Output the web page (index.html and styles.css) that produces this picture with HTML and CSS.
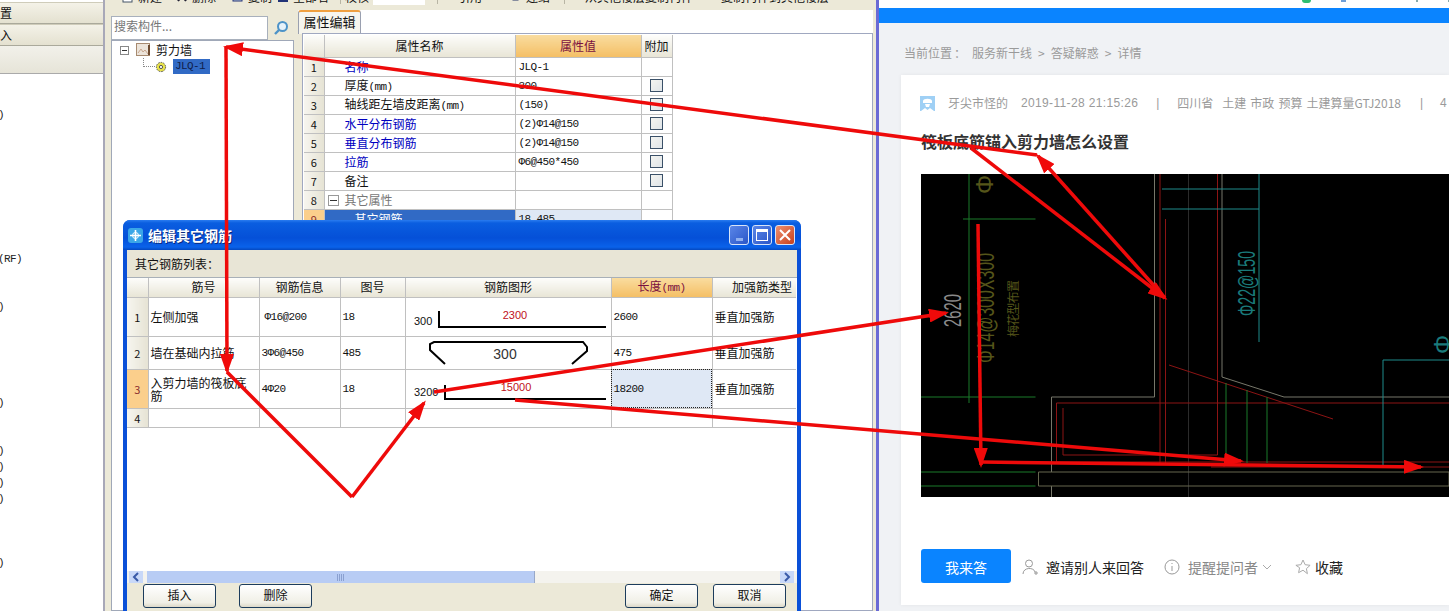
FILE: index.html
```html
<!DOCTYPE html>
<html lang="zh">
<head>
<meta charset="utf-8">
<title>编辑其它钢筋</title>
<link rel="stylesheet" href="styles.css">
</head>
<body>
<div class="screen">
  <section class="app">
    <aside class="side">
      <div class="side-row side-first">置</div>
      <div class="side-row">入</div>
      <div class="side-band"></div>
<pre class="side-list">


)








(RF)


)





)


)
)
)
)



)</pre>
    </aside>
    <div class="main">
      <div class="toolbar">
        <span class="tool"><svg class="ti" viewBox="0 0 12 12"><rect x="1" y="0" width="9" height="11" fill="#fff" stroke="#456"/></svg>新建</span>
        <span class="tool"><svg class="ti" viewBox="0 0 12 12"><path d="M2 0l8 10M10 0L2 10" stroke="#223" stroke-width="2"/></svg>删除</span>
        <span class="tool"><svg class="ti" viewBox="0 0 12 12"><rect x="1" y="0" width="9" height="10" fill="#bcd" stroke="#237"/></svg>复制</span>
        <span class="tool"><svg class="ti" viewBox="0 0 12 12"><path d="M1 10h10M4 0v10M8 0v10" stroke="#237" stroke-width="2"/></svg>全部名</span>
        <span class="tool tool-sep">校核</span>
        <span class="tool-input"></span>
        <span class="tool tool-sep"><svg class="ti" viewBox="0 0 12 12"><path d="M1 0l5 8M9 0v9" stroke="#a33" stroke-width="2"/></svg>引用</span>
        <span class="tool"><svg class="ti" viewBox="0 0 12 12"><rect x="3" y="0" width="5" height="9" fill="#67c" stroke="#236"/></svg>连结</span>
        <span class="tool tool-sep"><svg class="ti" viewBox="0 0 12 12"><path d="M1 7h5" stroke="#2a6" stroke-width="4"/><path d="M7 2h5M7 5h5M7 8h5" stroke="#568" stroke-width="1.5"/></svg>从其他楼层复制构件</span>
        <span class="tool"><svg class="ti" viewBox="0 0 12 12"><path d="M1 7h5" stroke="#2a6" stroke-width="4"/><path d="M7 2h5M7 5h5M7 8h5" stroke="#568" stroke-width="1.5"/></svg>复制构件到其他楼层</span>
      </div>
      <div class="panes">
        <div class="tree-pane">
          <div class="search">
            <div class="search-input">搜索构件...</div>
            <svg class="search-icon" viewBox="0 0 16 16"><circle cx="9.5" cy="6.5" r="4.5" fill="#e6f2fa" stroke="#4d93c8" stroke-width="2"/><path d="M6 10l-4 4" stroke="#4d93c8" stroke-width="2.4"/></svg>
          </div>
          <div class="tree">
            <div class="tree-root">
              <span class="tree-box"></span>
              <svg class="tree-ico" viewBox="0 0 15 14"><rect x=".5" y=".5" width="13" height="12" fill="#ece4da" stroke="#a78a70"/><path d="M2 10l3-4 2 3 2-2 3 4" fill="none" stroke="#c9a78f"/><rect x="12" y="2" width="2" height="10" fill="#6d4a30"/></svg>
              <span>剪力墙</span>
            </div>
            <div class="tree-leaf">
              <span class="tree-dots"></span>
              <svg class="tree-gear" viewBox="0 0 12 12"><circle cx="6" cy="6" r="4.6" fill="#e8e24a" stroke="#555" stroke-dasharray="1.6 1"/><circle cx="6" cy="6" r="1.6" fill="#fff" stroke="#555"/></svg>
              <span class="tree-sel mono">JLQ-1</span>
            </div>
          </div>
        </div>
        <div class="prop-pane">
          <div class="tabs"><span class="tab">属性编辑</span></div>
          <div class="prop-panel">
            <table class="grid prop-grid">
              <colgroup><col class="pc0"><col class="pc1"><col class="pc2"><col class="pc3"></colgroup>
              <tr class="head"><th></th><th>属性名称</th><th class="hot">属性值</th><th>附加</th></tr>
              <tr><th class="rn">1</th><td class="pn link">名称</td><td class="pv mono">JLQ-1</td><td></td></tr>
              <tr><th class="rn">2</th><td class="pn">厚度<span class="mono">(mm)</span></td><td class="pv mono">300</td><td class="cbc"><span class="cb"></span></td></tr>
              <tr><th class="rn">3</th><td class="pn">轴线距左墙皮距离<span class="mono">(mm)</span></td><td class="pv mono">(150)</td><td class="cbc"><span class="cb"></span></td></tr>
              <tr><th class="rn">4</th><td class="pn link">水平分布钢筋</td><td class="pv mono">(2)Φ14@150</td><td class="cbc"><span class="cb"></span></td></tr>
              <tr><th class="rn">5</th><td class="pn link">垂直分布钢筋</td><td class="pv mono">(2)Φ14@150</td><td class="cbc"><span class="cb"></span></td></tr>
              <tr><th class="rn">6</th><td class="pn link">拉筋</td><td class="pv mono">Φ6@450*450</td><td class="cbc"><span class="cb"></span></td></tr>
              <tr><th class="rn">7</th><td class="pn">备注</td><td class="pv"></td><td class="cbc"><span class="cb"></span></td></tr>
              <tr><th class="rn">8</th><td class="pn group"><span class="minus"></span>其它属性</td><td class="pv"></td><td></td></tr>
              <tr><th class="rn hotrow">9</th><td class="pn picked">其它钢筋</td><td class="pv mono valpick">18,485</td><td></td></tr>
            </table>
          </div>
        </div>
      </div>
    </div>
  </section>

  <section class="browser">
    <div class="browser-top">
      <span class="bt bt1"></span><span class="bt bt2"></span><span class="bt bt3"></span><span class="bt bt4"></span>
    </div>
    <div class="browser-bar"></div>
    <div class="page">
      <div class="crumb"><span>当前位置</span><span>：</span><span>服务新干线</span><span>&gt;</span><span>答疑解惑</span><span>&gt;</span><span>详情</span></div>
      <article class="card">
        <div class="meta">
          <svg class="avatar" viewBox="0 0 15 17"><path d="M0 1h15v15H0z" fill="#9fd0f5"/><path d="M3 6c0-3 9-3 9 0v2H3z" fill="#fff"/><path d="M5 9h5l-1 3H6zM1 16l4-3 2.500 2 2.500-2 4 3z" fill="#fff"/></svg>
          <span class="m-name">牙尖市怪的</span>
          <span class="m-date">2019-11-28 21:15:26</span>
          <span class="m-sep">|</span>
          <span class="m-tags"><span>四川省</span><span>土建</span><span>市政</span><span>预算</span><span>土建算量GTJ2018</span></span>
          <span class="m-sep m-sep2">|</span>
          <span class="m-date m-num">4</span>
        </div>
        <h1 class="title">筏板底筋锚入剪力墙怎么设置</h1>
        <svg class="cad" viewBox="0 0 528 323">
          <rect width="528" height="323" fill="#000"/>
          <g fill="none" stroke-width="1">
            <path d="M267.500 0V323" stroke="#2b2b2b"/>
            <path d="M233.500 0V223H130.500V298M130.500 312V323M301 0V203L363 223H528" stroke="#77776a"/>
            <path d="M117.500 298H528V312H117.500z" stroke="#66664f"/>
            <path d="M239 0V289M244.500 45V289M296.500 0V281H142V234M135.500 289V229H528M135.500 288H528M290 293H528M248 191L412 245" stroke="#8c1414"/>
            <path d="M338 0V168M241 15H338M241 35H338M462 291V186H528" stroke="#1f8b8b"/>
            <path d="M48 0V229M42 45H114.500M0 223H114.500M0 298H114.500M0 312H114.500M305 209V289M326 216V289M346 223V289" stroke="#1a7a2a"/>
          </g>
          <text class="cad-t cad-white" transform="translate(40 153) rotate(-90)" textLength="33" lengthAdjust="spacingAndGlyphs">2620</text>
          <text class="cad-t cad-olive" transform="translate(73 189) rotate(-90)" textLength="110" lengthAdjust="spacingAndGlyphs">Φ14@300X300</text>
          <text class="cad-c cad-olive" transform="translate(97 163) rotate(-90)" textLength="57">梅花型布置</text>
          <text class="cad-t cad-teal" transform="translate(334 142) rotate(-90)" textLength="65" lengthAdjust="spacingAndGlyphs">Φ22@150</text>
          <text class="cad-t cad-olive" transform="translate(72 20) rotate(-90)">Φ1</text>
          <text class="cad-t cad-teal" transform="translate(530 180) rotate(-90)">Φ</text>
        </svg>
        <div class="actions">
          <button class="answer">我来答</button>
          <span class="act act-invite"><svg class="aico" viewBox="0 0 16 16"><circle cx="7" cy="4.500" r="3.500" fill="none" stroke="#999"/><path d="M1 15c0-7 11-7 12-2M12 14h4M14 12v4" fill="none" stroke="#999"/></svg>邀请别人来回答</span>
          <span class="act act-gray"><svg class="aico" viewBox="0 0 16 16"><circle cx="8" cy="8" r="7" fill="none" stroke="#999"/><path d="M8 4v1M8 7v5" stroke="#999"/></svg>提醒提问者<svg class="chev" viewBox="0 0 10 6"><path d="M1 1l4 4 4-4" fill="none" stroke="#aaa"/></svg></span>
          <span class="act act-star"><svg class="aico" viewBox="0 0 16 16"><path d="M8 1l2.100 4.700 5 .6-3.700 3.400 1 5L8 11.200l-4.400 2.500 1-5L.900 6.300l5-.6z" fill="none" stroke="#aaa"/></svg>收藏</span>
        </div>
      </article>
    </div>
  </section>

  <div class="dialog">
    <header class="dlg-title">
      <svg class="dlg-ico" viewBox="0 0 15 15"><rect width="15" height="15" rx="3" fill="#3aa6e8"/><path d="M7.500 2v11M2 7.500h11" stroke="#fff" stroke-width="1.600"/><circle cx="7.500" cy="7.500" r="3" fill="none" stroke="#fff"/></svg>
      <span class="dlg-name">编辑其它钢筋</span>
      <span class="wbtns">
        <span class="wbtn"><i class="w-min"></i></span>
        <span class="wbtn"><i class="w-max"></i></span>
        <span class="wbtn wclose"><svg viewBox="0 0 12 12"><path d="M1 1l10 10M11 1L1 11" stroke="#fff" stroke-width="2"/></svg></span>
      </span>
    </header>
    <div class="dlg-body">
      <div class="dlg-label">其它钢筋列表：</div>
      <div class="dlg-gridwrap">
        <table class="grid dlg-grid">
          <colgroup><col class="dc0"><col class="dc1"><col class="dc2"><col class="dc3"><col class="dc4"><col class="dc5"><col class="dc6"></colgroup>
          <tr class="dhead"><th></th><th>筋号</th><th>钢筋信息</th><th>图号</th><th>钢筋图形</th><th class="hot">长度<span class="mono">(mm)</span></th><th class="hright">加强筋类型</th></tr>
          <tr class="r1">
            <th class="rn">1</th><td>左侧加强</td><td class="mono ind">Φ16@200</td><td class="mono">18</td>
            <td class="fig"><svg class="figsvg" viewBox="0 0 205 38"><text x="8" y="27" class="fig-n">300</text><text x="109" y="21" class="fig-r" text-anchor="middle">2300</text><path d="M33 13V29H200" fill="none" stroke="#000" stroke-width="2"/></svg></td>
            <td class="mono">2600</td><td>垂直加强筋</td>
          </tr>
          <tr class="r2">
            <th class="rn">2</th><td>墙在基础内拉筋</td><td class="mono">3Φ6@450</td><td class="mono">485</td>
            <td class="fig"><svg class="figsvg" viewBox="0 0 205 32"><text x="99" y="22" class="fig-b" text-anchor="middle">300</text><path d="M39 27L24 13V7L28 5H177L181 10V14L166 27" fill="none" stroke="#000" stroke-width="2"/></svg></td>
            <td class="mono">475</td><td>垂直加强筋</td>
          </tr>
          <tr class="r3">
            <th class="rn hotrow">3</th><td class="tight">入剪力墙的筏板底<br>筋</td><td class="mono">4Φ20</td><td class="mono">18</td>
            <td class="fig"><svg class="figsvg" viewBox="0 0 205 38"><text x="8" y="26" class="fig-n">3200</text><text x="110" y="21" class="fig-r" text-anchor="middle">15000</text><path d="M39 15V29H200" fill="none" stroke="#000" stroke-width="2"/></svg></td>
            <td class="mono valfocus">18200</td><td>垂直加强筋</td>
          </tr>
          <tr class="r4"><th class="rn">4</th><td></td><td></td><td></td><td></td><td></td><td></td></tr>
        </table>
      </div>
      <div class="scrollbar">
        <span class="sb-btn"><svg viewBox="0 0 8 10"><path d="M6 1L2 5l4 4" fill="none" stroke="#3a5aa8" stroke-width="2"/></svg></span>
        <span class="sb-thumb"><i></i></span>
        <span class="sb-track"></span>
        <span class="sb-btn"><svg viewBox="0 0 8 10"><path d="M2 1l4 4-4 4" fill="none" stroke="#3a5aa8" stroke-width="2"/></svg></span>
      </div>
      <div class="dlg-foot">
        <button class="xp">插入</button>
        <button class="xp">删除</button>
        <span class="grow"></span>
        <button class="xp">确定</button>
        <button class="xp">取消</button>
      </div>
    </div>
  </div>

  <svg class="arrows" viewBox="0 0 1449 611">
    <defs>
      <marker id="ah" viewBox="0 0 20 14" refX="17" refY="7" markerWidth="20" markerHeight="14" markerUnits="userSpaceOnUse" orient="auto"><path d="M0 0L20 7L0 14z" fill="#f00a0a"/></marker>
    </defs>
    <g fill="none" stroke="#ee0a0a" stroke-width="3.500">
      <line x1="1037" y1="155" x2="226" y2="47" marker-end="url(#ah)"/>
      <line x1="1165" y1="298" x2="1038" y2="156" marker-end="url(#ah)"/>
      <line x1="971" y1="148" x2="1165" y2="298" marker-end="url(#ah)"/>
      <line x1="226" y1="47" x2="227" y2="371" marker-end="url(#ah)"/>
      <line x1="227" y1="372" x2="352" y2="497"/>
      <line x1="352" y1="497" x2="424" y2="403" marker-end="url(#ah)"/>
      <line x1="434" y1="392" x2="946" y2="313" marker-end="url(#ah)"/>
      <line x1="515" y1="400" x2="1241" y2="461" marker-end="url(#ah)"/>
      <line x1="978" y1="224" x2="981" y2="465" marker-end="url(#ah)"/>
      <line x1="981" y1="462" x2="1421" y2="467" marker-end="url(#ah)"/>
    </g>
  </svg>
</div>
</body>
</html>
```

FILE: styles.css
```css
* { box-sizing: border-box; }
html, body { margin: 0; padding: 0; background: #ece9d8; }
body { font: 12px/14px "Noto Sans CJK SC", "Liberation Sans", sans-serif; color: #111; }
.screen { position: relative; display: flex; width: 1449px; height: 611px; overflow: hidden; }
.mono { font-family: "Liberation Mono", "Noto Sans CJK SC", monospace; font-size: 11px; letter-spacing: -.6px; }

/* desktop application */
.app { display: flex; flex: none; width: 876px; background: #ece9d8; }
.side { flex: none; width: 105px; padding-top: 2px; border-right: 2px solid #a8a8b8; background: #fff; overflow: hidden; }
.side-row { height: 22px; line-height: 19px; background: linear-gradient(#f4f2e8, #e4e1d0); border-top: 1px solid #cfccba; border-bottom: 1px solid #aaa99b; }
.side-band { height: 28px; background: linear-gradient(#f2f1ea, #e6e4d8); border-bottom: 1px solid #aaa; }
.side-list { margin: 0 0 0 -2px; padding-top: 1px; font: 11px/16px "Liberation Mono", monospace; letter-spacing: -.6px; color: #222; }
.main { flex: 1; display: flex; flex-direction: column; min-width: 0; }

.toolbar { flex: none; display: grid; grid-template-columns: 54px 56px 45px 63px 33px 64px 73px 54px 141px 140px; height: 10px; padding-left: 17px; overflow: hidden; background: #ece9d8; }
.tool { display: flex; align-items: center; gap: 4px; height: 14px; margin-top: -10px; white-space: nowrap; font-size: 12px; }
.tool-sep { border-left: 1px solid #b8b5a4; padding-left: 4px; }
.tool-input { display: block; width: 52px; height: 5px; background: #fff; }
.ti { flex: none; width: 12px; height: 12px; }

.panes { flex: 1; display: flex; min-height: 0; }
.tree-pane { flex: none; width: 189px; display: flex; flex-direction: column; padding: 5px 0 0 6px; }
.search { flex: none; display: flex; align-items: center; height: 25px; }
.search-input { width: 157px; height: 24px; padding-left: 2px; line-height: 18px; background: #fff; border: 1px solid #a8b0bc; color: #777; font-size: 12px; }
.search-icon { width: 16px; height: 16px; margin-left: 5px; }
.tree { flex: 1; background: #fff; border: 1px solid #a0a8b8; padding: 1px 0 0 8px; }
.tree-root { display: flex; align-items: center; height: 16px; }
.tree-box { flex: none; width: 9px; height: 9px; border: 1px solid #888; background: linear-gradient(90deg, transparent 1px, #333 1px, #333 6px, transparent 6px) center / 100% 1px no-repeat #fff; }
.tree-ico { flex: none; width: 15px; height: 14px; margin-left: 7px; }
.tree-root span:last-child { margin-left: 5px; }
.tree-leaf { display: flex; align-items: center; height: 15px; margin-top: 1px; }
.tree-dots { flex: none; width: 12px; height: 9px; margin: -9px 0 0 23px; border-left: 1px dotted #888; border-bottom: 1px dotted #888; }
.tree-gear { flex: none; width: 12px; height: 12px; }
.tree-sel { margin-left: 6px; width: 37px; height: 15px; padding-left: 2px; line-height: 15px; background: #316ac5; color: #10204a; }

.prop-pane { flex: 1; min-width: 0; display: flex; flex-direction: column; padding-right: 3px; padding-left: 3px; }
.tabs { flex: none; height: 23px; background: #fff; margin-left: 1px; }
.tab { display: block; width: 63px; height: 24px; line-height: 20px; text-align: center; background: #f6f5ee; border: 1px solid #9aa0b0; border-top: 2px solid #f0a040; border-bottom: 0; border-radius: 3px 3px 0 0; font-size: 13px; }
.prop-panel { flex: 1; background: #fff; border: 1px solid #a0a8c0; margin-left: 5px; padding: 1px 0 0 1px; }

.grid { border-collapse: collapse; table-layout: fixed; }
.grid th, .grid td { padding: 0; border: 1px solid #c0c0c0; font-weight: 400; overflow: hidden; white-space: nowrap; }
.grid tr:first-child th { border-top: 0; }
.grid th:first-child { border-left: 0; }
.prop-grid { width: 368px; }
.pc0 { width: 20px; } .pc1 { width: 191px; } .pc2 { width: 126px; } .pc3 { width: 31px; }
.prop-grid tr { height: 19px; }
.prop-grid tr.head { height: 22px; }
.head th, .dhead th { text-align: center; font-size: 12px; background: linear-gradient(#fdfdfb, #e8e5d6); }
.grid th.hot { background: linear-gradient(#f9dc9f, #f4bf65); color: #7a1040; }
.rn { text-align: center; background: linear-gradient(90deg, #f6f5ef, #e6e3d4); font-size: 11px; }
.grid th.hotrow { background: #fbcf8c; color: #8a3030; }
.pn { padding-left: 20px !important; }
.pv { padding-left: 3px !important; }
.link { color: #0000c0; }
.group { color: #777; padding-left: 3px !important; }
.minus { display: inline-block; width: 11px; height: 11px; margin-right: 6px; vertical-align: -1px; border: 1px solid #999; background: linear-gradient(#333, #333) center / 7px 1px no-repeat #fff; }
.grid .picked { background: #316ac5; color: #fff; padding-left: 30px !important; }
.valpick { background: #dfe8f5; }
.cbc { text-align: center; line-height: 0; }
.cb { display: inline-block; width: 13px; height: 13px; border: 1px solid #3a5068; background: linear-gradient(135deg, #f4f4f0, #dfe4e8); }

/* browser window */
.browser { flex: none; width: 573px; border-left: 3px solid #6a6ad4; background: #f0f2f5; display: flex; flex-direction: column; }
.browser-top { flex: none; position: relative; display: flex; height: 8px; overflow: hidden; background: #fff; padding-left: 280px; gap: 30px; }
.bt { display: block; width: 2px; height: 2px; background: #8aa; }
.bt1 { width: 12px; height: 3px; border-radius: 0 0 6px 6px; background: #2fbf71; margin-left: 143px; }
.bt2 { width: 7px; background: #6f9fd8; }
.bt3 { margin-left: 40px; }
.browser-bar { flex: none; height: 15px; background: #0a84ff; }
.page { flex: 1; padding-left: 22px; }
.crumb { display: flex; gap: 6px; height: 52px; padding: 23px 0 0 3px; color: #9a9a9a; font-size: 12px; line-height: 14px; }
.crumb span:nth-child(2) { margin-left: -4px; }
.card { width: 548px; height: 530px; padding: 20px 0 0 20px; background: #fff; box-shadow: 0 0 4px rgba(0,0,0,.06); }
.meta { display: flex; align-items: center; height: 16px; color: #9a9a9a; font-size: 12px; white-space: nowrap; }
.avatar { flex: none; width: 15px; height: 17px; margin-right: 13px; margin-left: -1px; }
.m-date { margin-left: 13px; font-family: "Liberation Sans", sans-serif; letter-spacing: .35px; }
.m-num { margin-left: 17px; }
.m-sep { margin-left: 18px; font-family: "Liberation Sans", sans-serif; }
.m-sep2 { margin-left: 19px; }
.m-tags { display: flex; gap: 4px; margin-left: 18px; }
.m-tags span:first-child { margin-right: 5px; }
.title { margin: 19px 0 0; height: 24px; font-size: 16px; line-height: 22px; font-weight: 700; color: #333; }
.cad { display: block; width: 528px; height: 323px; margin-top: 20px; }
.cad-t { font: 24px "Liberation Sans", sans-serif; }
.cad-c { font: 12px "Noto Sans CJK SC", sans-serif; }
.cad-white { fill: #8a8a8a; }
.cad-olive { fill: #55551a; }
.cad-teal { fill: #1a7a7a; }
.actions { display: flex; align-items: center; height: 34px; margin-top: 52px; font-size: 14px; color: #222; white-space: nowrap; }
.answer { width: 90px; height: 34px; padding: 1px 0 0; border: 0; border-radius: 3px; background: #0a84ff; color: #fff; font: 14px "Noto Sans CJK SC", sans-serif; }
.act { display: flex; align-items: center; padding-top: 2px; }
.aico { flex: none; width: 16px; height: 16px; margin-right: 8px; }
.act-invite { margin-left: 11px; }
.act-gray { margin-left: 20px; color: #888; }
.chev { width: 10px; height: 6px; margin-left: 4px; }
.act-star { margin-left: 23px; }
.act-star .aico { margin-right: 4px; }

/* floating dialog */
.dialog { position: absolute; left: 123px; top: 220px; width: 678px; height: 400px; display: flex; flex-direction: column; background: #0a50d8; border-radius: 7px 7px 0 0; }
.dlg-title { flex: none; display: flex; align-items: center; height: 30px; padding: 0 6px 0 5px; border-radius: 7px 7px 0 0; background: linear-gradient(#2a7cf0 0, #0a5ee0 10%, #0550d8 60%, #0a62ea 90%, #0448c0 100%); }
.dlg-ico { flex: none; width: 15px; height: 15px; }
.dlg-name { margin-left: 5px; color: #fff; font-size: 14px; font-weight: 700; text-shadow: 1px 1px 0 #0a2a80; }
.wbtns { display: flex; gap: 3px; margin-left: auto; }
.wbtn { display: flex; align-items: center; justify-content: center; width: 20px; height: 20px; border: 1px solid #d8e4f8; border-radius: 3px; background: linear-gradient(135deg, #5a86e8, #2a56c8); }
.wbtn i { display: block; }
.w-min { width: 7px; height: 3px; margin-top: 9px; background: #8fb0f0; }
.w-max { width: 12px; height: 12px; border: 1px solid #fff; border-top-width: 3px; }
.wclose { background: linear-gradient(135deg, #ee9070, #c8401c); }
.wclose svg { width: 12px; height: 12px; }
.dlg-body { flex: 1; display: flex; flex-direction: column; margin: 0 4px; background: #ece9d8; min-height: 0; }
.dlg-label { flex: none; height: 28px; padding-left: 8px; line-height: 27px; background: #e8e5d6; border-bottom: 1px solid #a8b0b8; font-size: 12px; }
.dlg-gridwrap { flex: none; height: 293px; background: #fff; overflow: hidden; }
.dlg-grid { width: 669px; }
.dc0 { width: 21px; } .dc1 { width: 111px; } .dc2 { width: 81px; } .dc3 { width: 65px; } .dc4 { width: 206px; } .dc5 { width: 101px; } .dc6 { width: 84px; }
.dlg-grid td { padding-left: 2px; }
.dlg-grid .ind { padding-left: 5px; }
.dlg-grid .hright { text-align: right; padding-right: 4px; border-right: 0; }
.dlg-grid td:last-child { border-right: 0; }
.dhead { height: 19px; }
.r1 { height: 39px; } .r2 { height: 33px; } .r3 { height: 39px; } .r4 { height: 19px; }
.dlg-grid .fig { padding: 0; }
.figsvg { display: block; width: 205px; height: 100%; }
.r1 .figsvg, .r3 .figsvg { height: 38px; }
.r2 .figsvg { height: 32px; }
.fig-n { font: 11px "Liberation Sans", sans-serif; fill: #111; }
.fig-r { font: 11px "Liberation Sans", sans-serif; fill: #c01020; }
.fig-b { font: 14px "Liberation Sans", sans-serif; font-weight: 400; fill: #333; }
.dlg-grid .tight { white-space: normal; line-height: 13px; }
.dlg-grid .valfocus { background: #dfe8f5; outline: 1px dotted #222; outline-offset: -1px; }
.scrollbar { flex: none; display: flex; align-items: center; height: 12px; margin-top: 0; padding: 0 3px 0 2px; background: #f4f3ee; }
.sb-btn { flex: none; width: 14px; height: 12px; display: flex; align-items: center; justify-content: center; background: #c8d8f8; }
.sb-btn svg { width: 8px; height: 10px; }
.sb-thumb { flex: none; display: flex; justify-content: center; align-items: center; width: 388px; height: 12px; margin-left: 4px; background: #b8ccf4; border-right: 1px solid #98a8c8; }
.sb-thumb i { display: block; width: 7px; height: 7px; background: repeating-linear-gradient(90deg, #8aa0d0 0 1px, transparent 1px 2px); }
.sb-track { flex: 1; }
.dlg-foot { flex: none; display: flex; gap: 23px; height: 40px; padding: 1px 0 0 16px; background: #ece9d8; }
.grow { flex: 1; margin-right: -8px; }
.xp { width: 73px; height: 24px; padding: 0 0 3px; border: 1px solid #1c3c5c; border-radius: 3px; background: linear-gradient(#fff, #f0efe6 80%, #dcd8c8); font: 12px "Noto Sans CJK SC", sans-serif; color: #111; }
.dlg-foot .xp:last-child { margin-right: 11px; margin-left: -8px; }

/* annotation arrows drawn over everything */
.arrows { position: absolute; left: 0; top: 0; width: 1449px; height: 611px; pointer-events: none; }
```
